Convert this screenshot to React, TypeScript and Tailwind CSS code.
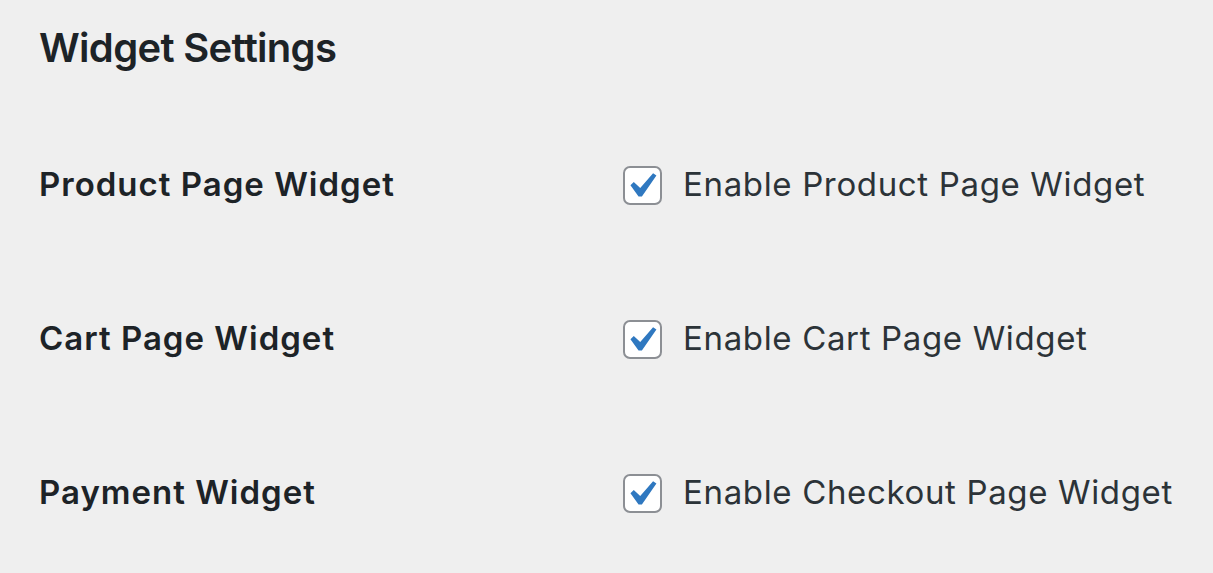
import React from 'react';

interface WidgetOption {
  title: string;
  label: string;
  checked: boolean;
}

const options: WidgetOption[] = [
  { title: 'Product Page Widget', label: 'Enable Product Page Widget', checked: true },
  { title: 'Cart Page Widget', label: 'Enable Cart Page Widget', checked: true },
  { title: 'Payment Widget', label: 'Enable Checkout Page Widget', checked: true },
];

const Checkbox: React.FC<{ checked: boolean }> = ({ checked }) => (
  <span className="relative block w-[39px] h-[39px] shrink-0 rounded-[7px] border-[2.4px] border-[#8c8f94] bg-white">
    {checked && (
      <svg
        viewBox="0 0 20 20"
        className="absolute left-[-9px] top-[-7px] w-[50px] h-[50px]"
      >
        <path d="M14.83 4.89l1.34.94-5.81 8.38H9.02L5.78 9.67l1.34-1.25 2.57 2.4z" fill="#2f78c0" />
      </svg>
    )}
  </span>
);

const App: React.FC = () => {
  return (
    <div
      className="w-[1213px] h-[573px] overflow-hidden bg-[#efefef] pl-[39px]"
      style={{ fontFamily: 'Inter, "Noto Sans", sans-serif' }}
    >
      <div className="h-[108px] pt-[28px]">
        <h2 className="text-[40px] leading-[40px] font-semibold text-[#1d2327] tracking-[-0.7px]">Widget Settings</h2>
      </div>
      {options.map((opt) => (
        <div key={opt.title} className="flex items-center h-[154px]">
          <div className="w-[584px] text-[33px] font-semibold text-[#1d2327] tracking-[1px]">{opt.title}</div>
          <label className="flex items-center gap-[21px]">
            <Checkbox checked={opt.checked} />
            <span className="text-[33px] text-[#2c3338] tracking-[0.65px]">{opt.label}</span>
          </label>
        </div>
      ))}
    </div>
  );
};

export default App;
